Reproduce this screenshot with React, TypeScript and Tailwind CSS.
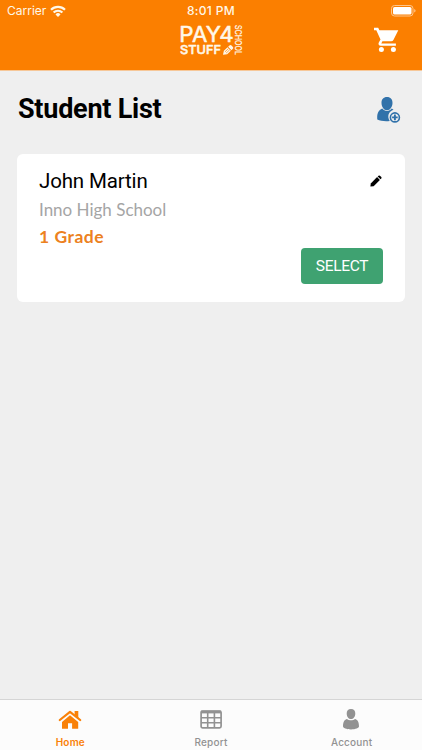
import type { ReactNode } from "react";
import { clsx } from "clsx";

function WifiIcon() {
  return (
    <svg viewBox="0 0 16 12" className="h-3 w-4" fill="none" stroke="#fff8e8" strokeWidth="2.200">
      <path d="M1 4.800a10 10 0 0 1 14 0" />
      <path d="M3.600 7.600a6.200 6.200 0 0 1 8.800 0" />
      <path d="M8 11.900 5.500 9.400a3.500 3.500 0 0 1 5 0z" fill="#fff8e8" stroke="none" />
    </svg>
  );
}

function BatteryIcon() {
  return (
    <svg viewBox="0 0 25 12" className="h-3 w-[25px]">
      <rect x=".5" y=".5" width="21.5" height="10.5" rx="3" fill="none" stroke="#ffc58a" />
      <rect x="2" y="2" width="18.5" height="7.5" rx="1.600" fill="#fff" />
      <path d="M23.200 4v3.600q1.400-.6 1.400-1.800T23.200 4z" fill="#ffc58a" />
    </svg>
  );
}

function Logo() {
  return (
    <svg
      viewBox="0 0 64 34"
      className="h-[34px] w-16 overflow-visible"
      fill="#fff8ea"
      stroke="#fff8ea"
      strokeWidth=".5"
      strokeLinejoin="round"
      fontFamily="Inter, sans-serif"
    >
      <text x=".3" y="18.500" fontSize="21.500" fontWeight="400" textLength="54.500" lengthAdjust="spacingAndGlyphs">
        PAY4
      </text>
      <text x="1" y="31.200" fontSize="12" fontWeight="500" textLength="41" lengthAdjust="spacingAndGlyphs">
        STUFF
      </text>
      <text
        transform="translate(55.700 2) rotate(90)"
        fontSize="8.300"
        fontWeight="500"
        strokeWidth=".1"
        textLength="30"
        lengthAdjust="spacingAndGlyphs"
      >
        SCHOOL
      </text>
      <g transform="translate(44 31.800) rotate(-43)" stroke="none">
        <path d="M0 0 3.400-2.400H8.500V2.400H3.400zM9.300-2.400H11q1.600 0 1.600 1.400V1q0 1.400-1.600 1.400H9.300z" />
        <path d="M3.400-.8h5M3.400.9h5" stroke="#fb7f00" strokeWidth=".6" />
      </g>
    </svg>
  );
}

function CartIcon() {
  return (
    <svg viewBox="0 0 25 26" className="h-[26px] w-[25px]" fill="#fff">
      <path d="M0 .8h4.200l1.200 2.400h18.900L19.400 13q-.7 1.300-2.200 1.300H8.400l-1.100 2.200h14.600v2.300H6.800c-2 0-2.800-1.700-2-3.200l1.700-3.100L2.300 3.200H0z" />
      <circle cx="7.400" cy="22.500" r="2.500" />
      <circle cx="19.400" cy="22.500" r="2.500" />
    </svg>
  );
}

function AddStudentIcon() {
  return (
    <svg viewBox="0 0 24 27" className="h-[27px] w-6" fill="#3172aa">
      <path d="M10 0c3.600 0 5.600 2.400 5.500 6-.1 4-2.300 7.200-5.500 7.200S4.600 10 4.500 6C4.400 2.400 6.400 0 10 0z" />
      <path d="M5.200 11.600c1.300 1.600 2.800 2.400 4.800 2.400s3.500-.8 4.800-2.400l1.700 1.200a7 7 0 0 0-3.700 11.100C8.500 24.500 3.500 24 .3 22.500c-.5-4.800.6-8.900 4.900-10.900z" />
      <circle cx="17.900" cy="20.400" r="4.500" fill="none" stroke="#3172aa" strokeWidth="1.600" />
      <path d="M17.900 17.600v5.600M15.100 20.400h5.600" stroke="#3172aa" strokeWidth="1.900" />
    </svg>
  );
}

function PencilIcon() {
  return (
    <svg viewBox="0 0 12 12" className="size-3" fill="#000">
      <path d="M.4 11.600.8 8.400 7.100 2.100l2.800 2.800-6.300 6.300z" />
      <path d="m7.700 1.500.8-.8q.7-.6 1.400 0l1.400 1.400q.6.700 0 1.400l-.8.8z" />
    </svg>
  );
}

function HomeIcon() {
  return (
    <svg viewBox="0 0 24 20" className="h-5 w-6" fill="currentColor">
      <path d="M12 5.200 20.200 12v6.700h-6.100v-5.500H10v5.500H4V12z" />
      <path d="M16.600.9h3.700v8l-3.700-3z" />
      <path d="m2.600 11.900 9.400-8 9.400 8" fill="none" stroke="#fcfcfc" strokeWidth=".9" />
      <path
        d="M1.800 10 12 1.800 22.200 10"
        fill="none"
        stroke="currentColor"
        strokeWidth="2.200"
        strokeLinecap="round"
        strokeLinejoin="round"
      />
    </svg>
  );
}

function ReportIcon() {
  return (
    <svg viewBox="0 0 22 19" className="h-[19px] w-[22px]" fill="none" stroke="currentColor">
      <rect x="1.100" y="1" width="20" height="16.800" rx="1.600" strokeWidth="1.700" />
      <path d="M1 2h20" strokeWidth="2.800" />
      <path d="M1 7.800h20M1 12.700h20M7.700 2v16M14.400 2v16" strokeWidth="1.600" />
    </svg>
  );
}

function AccountIcon() {
  return (
    <svg viewBox="0 0 16 21" className="mr-0.5 h-[21px] w-4" fill="currentColor">
      <path d="M8 0c2.900 0 4.400 1.900 4.300 4.700C12.200 7.800 10.400 10 8 10S3.800 7.800 3.700 4.700C3.600 1.900 5.100 0 8 0z" />
      <path d="M4.100 9.900c1.100 1 2.400 1.400 3.900 1.400s2.800-.4 3.900-1.400c3 .7 4.100 3.500 4.100 7.400 0 1.900-3.300 3.100-8 3.100s-8-1.200-8-3.100c0-3.900 1.100-6.700 4.100-7.400z" />
    </svg>
  );
}

const tabs: { label: string; icon: ReactNode; active?: boolean }[] = [
  { label: "Home", icon: <HomeIcon />, active: true },
  { label: "Report", icon: <ReportIcon /> },
  { label: "Account", icon: <AccountIcon /> },
];

export default function App() {
  return (
    <div className="flex h-[750px] w-[422px] flex-col overflow-hidden bg-[#efefef] font-[Roboto,sans-serif]">
      <header className="h-[71px] border-b border-[#f6c798] bg-[#fb7f00]">
        <div className="grid h-[22px] grid-cols-3 items-center font-[Inter,sans-serif] text-[#fff8e8]">
          <div className="flex items-center gap-1 pl-[7px]">
            <span className="text-xs leading-none">Carrier</span>
            <WifiIcon />
          </div>
          <span className="text-center text-xs leading-none font-medium tracking-[0.35px]">8:01 PM</span>
          <div className="flex justify-end pr-1.5">
            <BatteryIcon />
          </div>
        </div>
        <div className="grid grid-cols-3">
          <div />
          <div className="flex justify-center pt-px">
            <Logo />
          </div>
          <div className="flex justify-end pt-[5px] pr-[23px]">
            <CartIcon />
          </div>
        </div>
      </header>

      <main className="flex-1 px-[17px]">
        <div className="flex items-start justify-between pt-[26px] pr-1">
          <h1 className="pl-px text-[27px] leading-6 font-bold tracking-[-0.25px] text-black">Student List</h1>
          <AddStudentIcon />
        </div>

        <section className="mt-[30px] h-[148px] rounded-md bg-white px-[22px] pt-3.5">
          <div className="flex items-start justify-between">
            <h2 className="text-[20.5px] leading-[27px] tracking-[-0.15px] text-black">John Martin</h2>
            <div className="pt-[7px] pr-px">
              <PencilIcon />
            </div>
          </div>
          <p className="mt-[3px] font-[Lato,sans-serif] text-[17px] leading-6 text-[#a5a5a5]">Inno High School</p>
          <p className="mt-[3px] font-[Lato,sans-serif] text-[17.5px] leading-6 font-bold tracking-[0.5px] text-[#ec8120]">
            1 Grade
          </p>
          <div className="flex justify-end">
            <button className="-mt-px h-9 w-[82px] rounded bg-[#3fa271] pt-px text-[15.5px] tracking-[-0.3px] text-white">
              SELECT
            </button>
          </div>
        </section>
      </main>

      <nav className="grid h-[51px] grid-cols-3 border-t border-[#d5d5d5] bg-[#fcfcfc] font-[Inter,sans-serif]">
        {tabs.map((tab) => (
          <div
            key={tab.label}
            className={clsx("flex flex-col items-center", tab.active ? "text-[#f98108]" : "text-[#929292]")}
          >
            <div className="flex h-[35px] items-center pt-1">{tab.icon}</div>
            <span
              className={clsx("text-[10px] leading-[14px] tracking-[0.2px]", tab.active ? "font-semibold" : "font-medium")}
            >
              {tab.label}
            </span>
          </div>
        ))}
      </nav>
    </div>
  );
}
